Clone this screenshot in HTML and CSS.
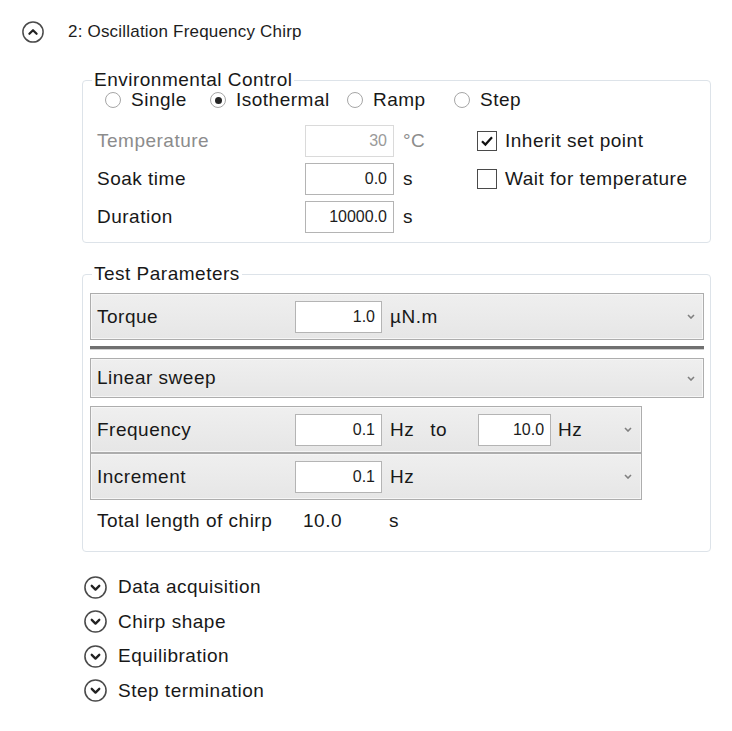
FILE: index.html
```html
<!DOCTYPE html>
<html lang="en">
<head>
    <meta charset="UTF-8">
    <meta name="viewport" content="width=device-width, initial-scale=1.0">
    <title>Oscillation Frequency Chirp</title>
    <link rel="stylesheet" href="styles.css">
</head>
<body>

<div class="step-head">
    <svg class="toggle" viewBox="0 0 22 22">
        <circle cx="11" cy="11" r="10.1" fill="none" stroke="#4a4a4a" stroke-width="1.5"/>
        <path d="M7.4 12.8 L11 9.2 L14.6 12.8" fill="none" stroke="#222" stroke-width="2.2" stroke-linecap="round" stroke-linejoin="round"/>
    </svg>
    <span class="step-title">2: Oscillation Frequency Chirp</span>
</div>

<fieldset class="group env">
    <legend>Environmental Control</legend>
    <div class="modes">
        <label class="radio"><span class="radio-dot"></span>Single</label>
        <label class="radio checked"><span class="radio-dot"></span>Isothermal</label>
        <label class="radio"><span class="radio-dot"></span>Ramp</label>
        <label class="radio"><span class="radio-dot"></span>Step</label>
    </div>

    <div class="env-grid">
        <span class="env-label disabled">Temperature</span>
        <input class="num" type="text" value="30" disabled>
        <span class="unit disabled">°C</span>
        <label class="check checked">
            <span class="check-box">
                <svg viewBox="0 0 18 18"><path d="M4 9.2 L7.4 12.6 L14 5.2" fill="none" stroke="#111" stroke-width="2.2"/></svg>
            </span>
            Inherit set point
        </label>

        <span class="env-label">Soak time</span>
        <input class="num" type="text" value="0.0">
        <span class="unit">s</span>
        <label class="check"><span class="check-box"></span>Wait for temperature</label>

        <span class="env-label">Duration</span>
        <input class="num" type="text" value="10000.0">
        <span class="unit">s</span>
        <span></span>
    </div>
</fieldset>

<fieldset class="group params">
    <legend>Test Parameters</legend>

    <div class="panel">
        <span class="param-label">Torque</span>
        <input class="num" type="text" value="1.0">
        <span class="unit">µN.m</span>
        <svg class="drop" viewBox="0 0 8 5"><path d="M1 1 L4 4 L7 1" fill="none" stroke="#808080" stroke-width="1.6"/></svg>
    </div>

    <div class="separator"></div>

    <div class="panel short">
        <span class="param-label">Linear sweep</span>
        <svg class="drop" viewBox="0 0 8 5"><path d="M1 1 L4 4 L7 1" fill="none" stroke="#808080" stroke-width="1.6"/></svg>
    </div>

    <div class="panel narrow">
        <span class="param-label">Frequency</span>
        <input class="num" type="text" value="0.1">
        <span class="unit">Hz</span>
        <span class="to">to</span>
        <input class="num small" type="text" value="10.0">
        <span class="unit tight">Hz</span>
        <svg class="drop" viewBox="0 0 8 5"><path d="M1 1 L4 4 L7 1" fill="none" stroke="#808080" stroke-width="1.6"/></svg>
    </div>

    <div class="panel narrow">
        <span class="param-label">Increment</span>
        <input class="num" type="text" value="0.1">
        <span class="unit">Hz</span>
        <svg class="drop" viewBox="0 0 8 5"><path d="M1 1 L4 4 L7 1" fill="none" stroke="#808080" stroke-width="1.6"/></svg>
    </div>

    <div class="total">
        <span class="total-label">Total length of chirp</span>
        <span class="total-value">10.0</span>
        <span>s</span>
    </div>
</fieldset>

<div class="sub-list">
    <div class="sub-item">
        <svg class="toggle" viewBox="0 0 22 22">
            <circle cx="11" cy="11" r="10.1" fill="none" stroke="#4a4a4a" stroke-width="1.5"/>
            <path d="M7.4 9.4 L11 13 L14.6 9.4" fill="none" stroke="#222" stroke-width="2.2" stroke-linecap="round" stroke-linejoin="round"/>
        </svg>
        <span>Data acquisition</span>
    </div>
    <div class="sub-item">
        <svg class="toggle" viewBox="0 0 22 22">
            <circle cx="11" cy="11" r="10.1" fill="none" stroke="#4a4a4a" stroke-width="1.5"/>
            <path d="M7.4 9.4 L11 13 L14.6 9.4" fill="none" stroke="#222" stroke-width="2.2" stroke-linecap="round" stroke-linejoin="round"/>
        </svg>
        <span>Chirp shape</span>
    </div>
    <div class="sub-item">
        <svg class="toggle" viewBox="0 0 22 22">
            <circle cx="11" cy="11" r="10.1" fill="none" stroke="#4a4a4a" stroke-width="1.5"/>
            <path d="M7.4 9.4 L11 13 L14.6 9.4" fill="none" stroke="#222" stroke-width="2.2" stroke-linecap="round" stroke-linejoin="round"/>
        </svg>
        <span>Equilibration</span>
    </div>
    <div class="sub-item">
        <svg class="toggle" viewBox="0 0 22 22">
            <circle cx="11" cy="11" r="10.1" fill="none" stroke="#4a4a4a" stroke-width="1.5"/>
            <path d="M7.4 9.4 L11 13 L14.6 9.4" fill="none" stroke="#222" stroke-width="2.2" stroke-linecap="round" stroke-linejoin="round"/>
        </svg>
        <span>Step termination</span>
    </div>
</div>

</body>
</html>
```

FILE: styles.css
```css
/* general */
body {
    margin: 0;
    background-color: #fff;
    font-family: 'Liberation Sans', Arial, sans-serif;
    font-size: 19px;
    letter-spacing: 0.5px;
    color: #181818;
}

.step-head {
    display: flex;
    align-items: center;
    gap: 24px;
    height: 22px;
    padding: 21px 0 0 22px;
}

.toggle {
    display: block;
    width: 22px;
    height: 22px;
    flex-shrink: 0;
}

.step-title {
    font-size: 17px;
    letter-spacing: 0.2px;
    color: #1c1c1c;
}

/* group boxes */
.group {
    margin: 27px 21px 0 82px;
    padding: 0 6px 9px 7px;
    border: 1px solid #dde3e9;
    border-radius: 4px;
    min-width: 0;
}

.group legend {
    margin-left: 2px;
    padding: 0 2px;
    line-height: 20px;
}

.params {
    margin-top: 21px;
    padding-top: 9px;
    padding-bottom: 18px;
}

/* radio row */
.modes {
    display: grid;
    grid-template-columns: 105px 137px 107px auto;
    height: 20px;
    margin-left: 15px;
}

.radio {
    display: flex;
    align-items: center;
    gap: 10px;
    line-height: 20px;
}

.radio-dot {
    position: relative;
    width: 14px;
    height: 14px;
    border: 1px solid #a6a6a6;
    border-radius: 50%;
    background-color: #fff;
    flex-shrink: 0;
}

.radio.checked .radio-dot::after {
    content: "";
    position: absolute;
    left: 3.5px;
    top: 3.5px;
    width: 7px;
    height: 7px;
    border-radius: 50%;
    background-color: #262626;
}

/* environmental rows */
.env-grid {
    display: grid;
    grid-template-columns: 208px 89px 83px auto;
    grid-auto-rows: 32px;
    row-gap: 6px;
    align-items: center;
    margin: 15px 0 0 7px;
}

.disabled {
    color: #8c8c8c;
}

.unit {
    padding-left: 9px;
}

.num {
    box-sizing: border-box;
    width: 100%;
    height: 32px;
    padding: 0 6px;
    border: 1px solid #b4b4b4;
    background-color: #fff;
    font-family: 'Liberation Sans', Arial, sans-serif;
    font-size: 16px;
    color: #1c1c1c;
    text-align: right;
}

.num:disabled {
    border-color: #dadada;
    color: #9a9a9a;
}

.check {
    display: flex;
    align-items: center;
    gap: 8px;
}

.check-box {
    display: flex;
    align-items: center;
    justify-content: center;
    width: 18px;
    height: 18px;
    border: 1px solid #4a4a4a;
    background-color: #fff;
    flex-shrink: 0;
}

.check-box svg {
    width: 18px;
    height: 18px;
}

/* test parameter panels */
.panel {
    display: flex;
    align-items: center;
    box-sizing: border-box;
    height: 47px;
    padding: 0 8px 0 6px;
    border: 1px solid #adadad;
    box-shadow: inset 0 0 0 1px #f6f6f6;
    background: linear-gradient(#efefef, #e6e6e6);
}

.panel .num {
    width: 87px;
}

.param-label {
    width: 198px;
    flex-shrink: 0;
}

.panel .unit {
    padding-left: 8px;
}

.drop {
    width: 8px;
    height: 5px;
    margin-left: auto;
}

.short {
    height: 40px;
}

.narrow {
    width: 552px;
    padding-right: 9px;
}

.to {
    margin-left: 16px;
}

.panel .num.small {
    width: 73px;
    margin-left: 31px;
}

.panel .unit.tight {
    padding-left: 7px;
}

.panel + .panel {
    margin-top: 8px;
}

.narrow + .narrow {
    margin-top: 0;
}

.separator {
    height: 3px;
    margin: 6px 0 8px;
    background-color: #707070;
    border-bottom: 1px solid #d0d0d0;
}

.total {
    display: flex;
    align-items: center;
    height: 24px;
    margin-top: 9px;
    padding-left: 7px;
}

.total-label {
    width: 206px;
}

.total-value {
    width: 86px;
}

/* collapsed sections */
.sub-list {
    display: flex;
    flex-direction: column;
    gap: 10.5px;
    margin-top: 23px;
    padding-left: 84px;
}

.sub-item {
    display: flex;
    align-items: center;
    gap: 11px;
    height: 24px;
}

.sub-item .toggle {
    width: 23px;
    height: 23px;
}
```
